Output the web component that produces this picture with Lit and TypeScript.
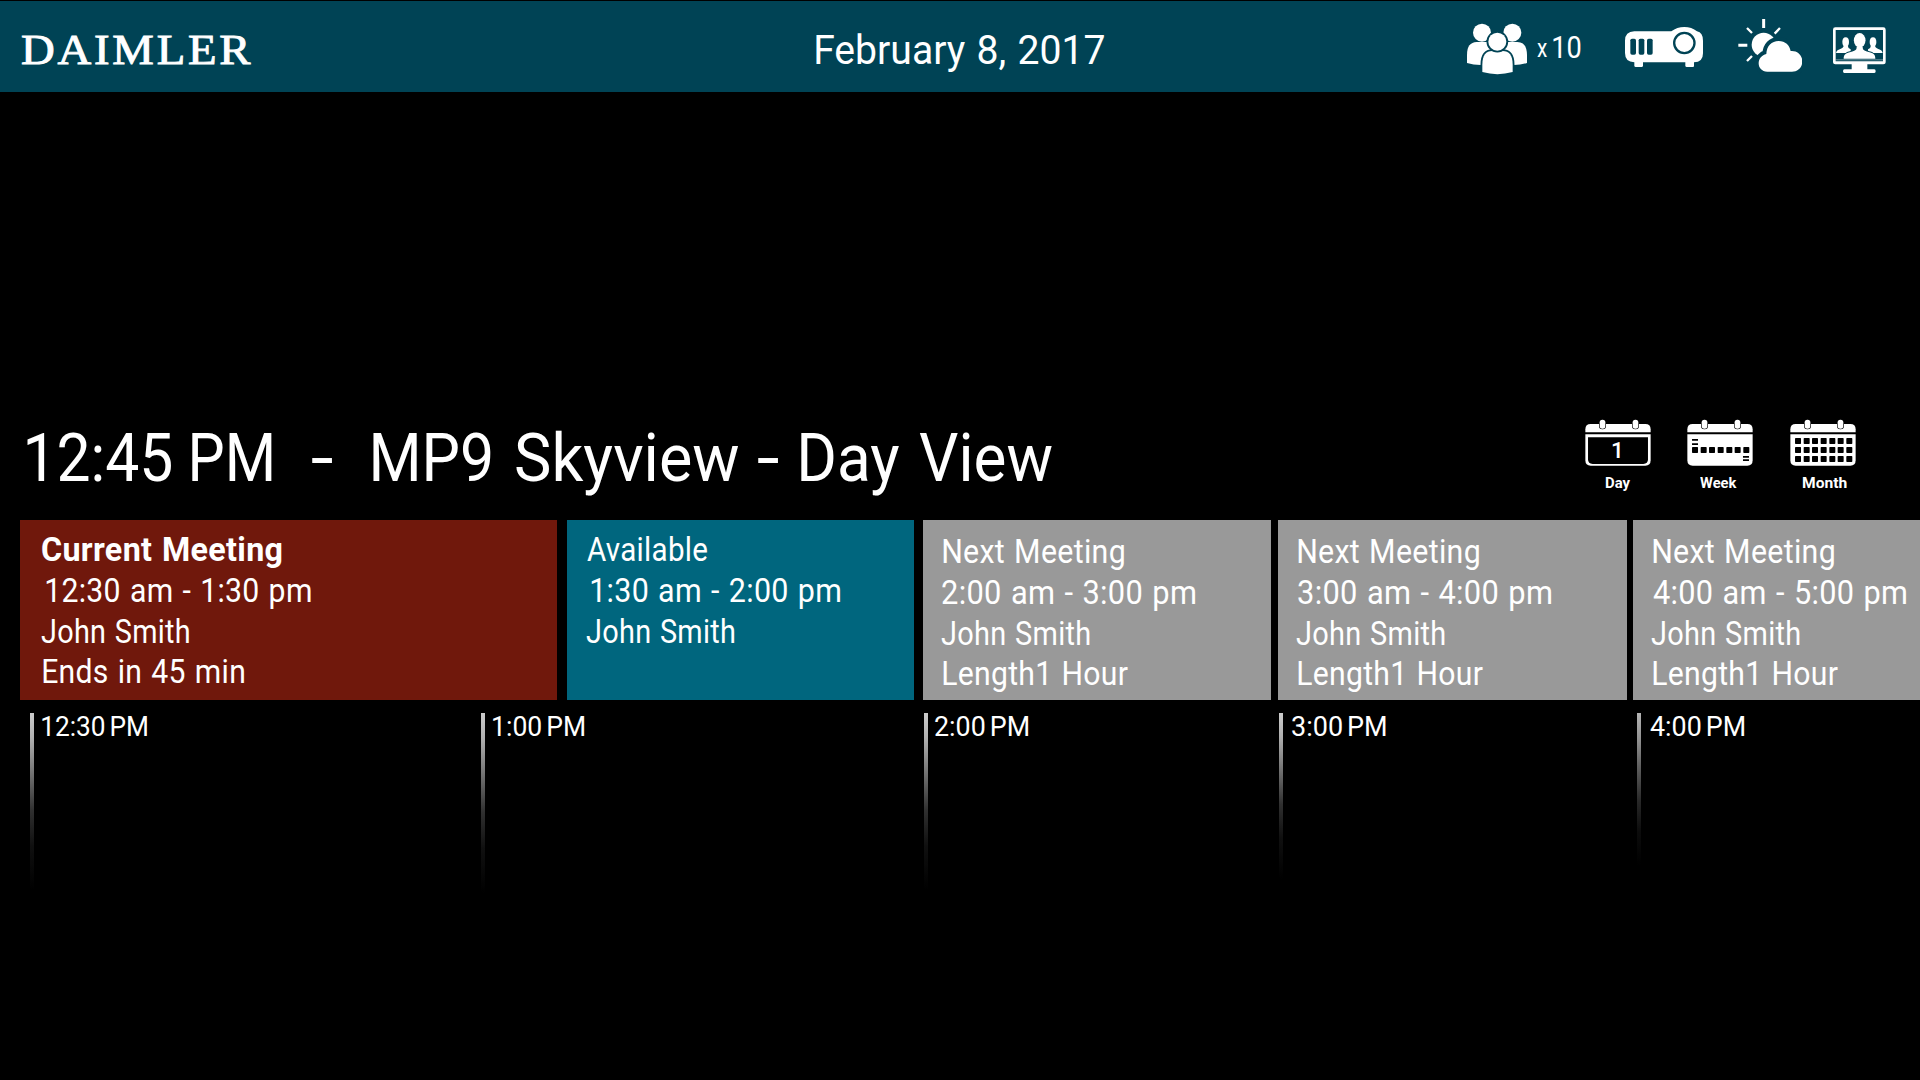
import {css, html, LitElement, svg} from 'lit';
import {customElement, property, query} from 'lit/decorators.js';

interface Word {
  text: string;
  width: number;
  gap: number; // space before the word
}

interface CardLine {
  text: string;
  indent: number;
  width: number;
  bold?: boolean;
}

interface Card {
  kind: 'current' | 'available' | 'next';
  width: number;
  gap: number;
  lines: CardLine[];
}

interface Slot {
  label: string;
  width: number;
  inset: number;
  labelWidth: number;
  tickHeight: number;
  faint?: boolean;
}

// One run of text, condensed or widened so its ink fills the given width
@customElement('fit-text')
export class FitText extends LitElement {
  @property({ type: String }) text = '';
  @property({ type: Number }) width = 100;

  @query('.run') private run!: HTMLElement;

  static styles = css`
    :host {
      display: block;
      flex: none;
      white-space: pre;
    }

    .run {
      display: inline-block;
      transform-origin: 0 50%;
    }
  `;

  render() {
    return html`<span class="run">${this.text}</span>`;
  }

  updated() {
    const ctx = document.createElement('canvas').getContext('2d') as any;
    const style = getComputedStyle(this.run);
    ctx.font = `${style.fontWeight} ${style.fontSize} ${style.fontFamily}`;
    ctx.letterSpacing = style.letterSpacing === 'normal' ? '0px' : style.letterSpacing;
    ctx.wordSpacing = style.wordSpacing;
    const m = ctx.measureText(this.text);
    const scale = this.width / (m.actualBoundingBoxLeft + m.actualBoundingBoxRight);
    this.style.width = `${this.width}px`;
    this.run.style.transform =
      `translateX(${m.actualBoundingBoxLeft * scale}px) scaleX(${scale})`;
  }
}

const TITLE: Word[] = [
  { text: '12:45', width: 144.5, gap: 27 },
  { text: 'PM', width: 80, gap: 20 },
  { text: '-', width: 20, gap: 40 },
  { text: 'MP9', width: 117.5, gap: 41.5 },
  { text: 'Skyview', width: 223, gap: 25.5 },
  { text: '-', width: 20, gap: 18.5 },
  { text: 'Day', width: 98.5, gap: 23.5 },
  { text: 'View', width: 133.5, gap: 19.5 },
];

const nextMeeting = (time: string, width: number, gap: number): Card => ({
  kind: 'next',
  width,
  gap,
  lines: [
    { text: 'Next Meeting', indent: 20, width: 181.5 },
    { text: time, indent: 19.3, width: 253.5 },
    { text: 'John Smith', indent: 18.2, width: 148.5 },
    { text: 'Length1 Hour', indent: 20, width: 185 },
  ],
});

const CARDS: Card[] = [
  {
    kind: 'current',
    width: 537.5,
    gap: 19.5,
    lines: [
      { text: 'Current Meeting', indent: 22.2, width: 239.5, bold: true },
      { text: '12:30 am - 1:30 pm', indent: 26.5, width: 265 },
      { text: 'John Smith', indent: 21.8, width: 148 },
      { text: 'Ends in 45 min', indent: 23.7, width: 201 },
    ],
  },
  {
    kind: 'available',
    width: 347.5,
    gap: 9.7,
    lines: [
      { text: 'Available', indent: 20, width: 120.7 },
      { text: '1:30 am - 2:00 pm', indent: 24.2, width: 249.5 },
      { text: 'John Smith', indent: 19.5, width: 148.2 },
    ],
  },
  nextMeeting('2:00 am - 3:00 pm', 348.3, 9),
  nextMeeting('3:00 am - 4:00 pm', 348.4, 6.8),
  nextMeeting('4:00 am - 5:00 pm', 348.4, 6.6),
];

const SLOTS: Slot[] = [
  { label: '12:30 PM', width: 451, inset: 8.3, labelWidth: 105.5, tickHeight: 177 },
  { label: '1:00 PM', width: 443, inset: 8.3, labelWidth: 91.7, tickHeight: 180 },
  { label: '2:00 PM', width: 355, inset: 6.6, labelWidth: 93.7, tickHeight: 177 },
  { label: '3:00 PM', width: 358, inset: 8.6, labelWidth: 94.3, tickHeight: 166 },
  { label: '4:00 PM', width: 283, inset: 8.8, labelWidth: 94.7, tickHeight: 152, faint: true },
];

// Header icons share the full bar height, three units to a pixel
const peopleIcon = html`
  <svg class="bar-icon people" viewBox="51 3 180 273">
    <circle cx="96" cy="98" r="27" />
    <circle cx="187" cy="98" r="27" />
    <path d="M51 189V166C51 138 61 127 80 126H112C126 127 134 134 137 146V195H92Q70 195 51 189Z" />
    <path d="M231 189V166C231 138 221 127 202 126H172C158 127 150 134 147 146V195H192Q212 195 231 189Z" />
    <path class="front" d="M97 216V194C97 166 108 153 127 153H158C177 153 188 166 188 194V216Q142 229 97 216Z" />
    <circle class="front" cx="142" cy="125" r="27" />
  </svg>
`;

const projectorIcon = html`
  <svg class="bar-icon projector" viewBox="525 3 234 273">
    <path d="M553 94H664Q681 81 703 81T741 94Q759 98 759 122V160Q759 187 732 187V198Q732 201 729 201H710Q707 201 706 198V187H579V198Q578 201 575 201H557Q554 201 553 198V187Q525 186 525 159V122Q525 95 553 94Z" />
    <circle class="lens" cx="703" cy="129" r="30.5" />
    <rect class="hole" x="541" y="116" width="17" height="48" rx="5" />
    <rect class="hole" x="566" y="116" width="17" height="48" rx="5" />
    <rect class="hole" x="591" y="116" width="17" height="48" rx="5" />
  </svg>
`;

const weatherIcon = html`
  <svg class="bar-icon weather" viewBox="113 3 193 273">
    <circle cx="190" cy="134" r="36" />
    <path class="ray wide" d="M190 57V84M114 136H141" />
    <path class="ray" d="M140 84L155 99M239 84L223 101M155 168L140 183" />
    <path class="cloud" d="M201 215C184 215 175 203 175 190C175 176 185 165 198 162C199 138 214 123 235 123C255 123 268 136 271 153C292 151 306 166 306 184C306 202 293 215 275 215Z" />
  </svg>
`;

const conferenceIcon = html`
  <svg class="bar-icon conference" viewBox="399 3 158 273">
    <path fill-rule="evenodd" d="M406 82H550Q557 82 557 89V187Q557 193 550 193H406Q399 193 399 187V89Q399 82 406 82ZM407 90V184H549V90Z" />
    <ellipse cx="437" cy="126" rx="10" ry="14" />
    <ellipse cx="519" cy="126" rx="10" ry="14" />
    <path d="M408 159Q409 150 421 147Q431 144 431 136H443Q443 144 452 148V159ZM548 159Q547 150 535 147Q525 144 525 136H513Q513 144 504 148V159Z" />
    <path class="speaker" d="M431 176C431 164 437 159 452 156C467 152 470 149 470 140H488C488 149 491 152 506 156C521 159 526 164 526 176Z" />
    <ellipse cx="479" cy="121" rx="17.5" ry="22" />
    <rect x="407" y="178" width="142" height="3" opacity="0.45" />
    <path d="M455 191H502V208H523Q527 209 527 213.500T523 219H433Q429 218 429 213.500T433 208H455Z" />
  </svg>
`;

const calendarFrame = svg`
  <path d="M46 82V73Q46 57 62 57H226Q242 57 242 73V82Z" />
  <path d="M46 88H242V166Q242 182 226 182H62Q46 182 46 166Z" />
  <rect class="ring" x="89" y="44" width="17" height="27" rx="8" />
  <rect class="ring" x="188" y="44" width="17" height="27" rx="8" />
`;

const COLUMNS = [60, 86, 111, 137, 163, 188, 214];

const dayRow = (y: number) =>
  COLUMNS.map((x) => svg`<rect class="ink" x=${x} y=${y} width="18" height="18" rx="2" />`);

const dayIcon = html`
  <svg class="calendar" viewBox="45 42 198 142">
    ${calendarFrame}
    <path class="ink" d="M54 97H234V163Q234 177 220 177H68Q54 177 54 163Z" />
    <text class="date" x="142" y="159">1</text>
  </svg>
`;

const weekIcon = html`
  <svg class="calendar week" viewBox="45 42 198 142">
    ${calendarFrame}
    <path class="ink" d="M60 102H78V107H60ZM60 115H78V120H60ZM213 153H231V158H213ZM213 163H231V168H213Z" />
    ${dayRow(126)}
  </svg>
`;

const monthIcon = html`
  <svg class="calendar" viewBox="45 42 198 142">
    ${calendarFrame}
    ${[99, 126, 153].map(dayRow)}
  </svg>
`;

@customElement('meeting-card')
export class MeetingCard extends LitElement {
  @property({ attribute: false }) card!: Card;

  static styles = css`
    :host {
      display: block;
      flex: none;
    }

    .card {
      box-sizing: border-box;
      height: 180px;
      padding-top: 10.3px;
      font-size: 32.5px;
      line-height: 40.7px;
      word-spacing: 0.04em;
      letter-spacing: 0.01em;
    }

    .current {
      background: #70180c;
    }

    .available {
      background: #00667e;
    }

    .next {
      padding-top: 12.3px;
      background: #999;
    }

    .bold {
      font-weight: 700;
    }
  `;

  render() {
    return html`
      <div class="card ${this.card.kind}" style="width: ${this.card.width}px">
        ${this.card.lines.map(
          (line) => html`
            <div class=${line.bold ? 'bold' : ''} style="padding-left: ${line.indent}px">
              <fit-text .text=${line.text} .width=${line.width}></fit-text>
            </div>
          `
        )}
      </div>
    `;
  }
}

@customElement('app-root')
export class AppRoot extends LitElement {
  static styles = css`
    :host {
      display: flex;
      flex-direction: column;
      box-sizing: border-box;
      width: 1920px;
      height: 1080px;
      padding-top: 1px;
      overflow: hidden;
      background: #000;
      color: #fff;
      font-family: Roboto, 'Liberation Sans', sans-serif;
    }

    .bar {
      display: grid;
      grid-template-columns: 816px 1fr auto;
      height: 91px;
      background: #004355;
      line-height: 91px;
    }

    .logo {
      padding: 4px 0 0 21.5px;
      font-family: 'Liberation Serif', serif;
      font-size: 42px;
      letter-spacing: 0.06em;
      -webkit-text-stroke: 0.9px #fff;
    }

    .today {
      padding-top: 4px;
      font-size: 41px;
      word-spacing: 0.04em;
    }

    .status {
      display: flex;
      padding-right: 34.3px;
    }

    .bar-icon {
      display: block;
      height: 91px;
      fill: #fff;
    }

    .people {
      width: 60px;
    }

    .times {
      padding-left: 10px;
      font-size: 25px;
      padding-top: 2px;
    }

    .count {
      padding: 0.5px 44.3px 0 5.7px;
      font-size: 32px;
    }

    .projector {
      width: 78px;
    }

    .weather {
      width: 64.3px;
      margin: 0 31px 0 34.7px;
    }

    .conference {
      width: 52.7px;
    }

    .front,
    .cloud,
    .speaker {
      stroke: #004355;
      stroke-width: 11;
      paint-order: stroke;
    }

    .cloud {
      stroke-width: 24;
    }

    .speaker {
      stroke-width: 6;
    }

    .lens {
      stroke: #004355;
      stroke-width: 7;
    }

    .hole {
      fill: #004355;
    }

    .ray {
      stroke: #fff;
      stroke-width: 7;
    }

    .wide {
      stroke-width: 9;
    }

    .heading {
      display: flex;
      justify-content: space-between;
      margin-top: 325.4px;
      height: 102.6px;
    }

    .title {
      display: flex;
      padding-top: 1.6px;
      font-size: 66px;
      line-height: 80px;
    }

    .views {
      display: flex;
      gap: 36.4px;
      padding: 1.6px 64px 0 0;
    }

    .view {
      display: flex;
      flex-direction: column;
      align-items: center;
      width: 66px;
      font-size: 15px;
      font-weight: 700;
      line-height: 20px;
    }

    .calendar {
      display: block;
      width: 66px;
      height: 47.3px;
      margin-bottom: 6.5px;
      fill: #fff;
    }

    .week {
      margin-right: 1px;
    }

    .ring {
      stroke: #000;
      stroke-width: 4;
      paint-order: stroke;
    }

    .ink {
      fill: #000;
    }

    .date {
      font-size: 68px;
      font-weight: 500;
      text-anchor: middle;
    }

    .day-label {
      margin-right: 1px;
    }

    .week-label {
      margin-right: 3px;
    }

    .month-label {
      margin-left: 3px;
    }

    .cards {
      display: flex;
      width: 2100px;
    }

    .timeline {
      display: flex;
      padding: 13px 0 0 30px;
    }

    .slot {
      display: flex;
      flex: none;
      font-size: 28px;
      line-height: 27px;
      word-spacing: -0.1em;
    }

    .tick {
      flex: none;
      width: 4px;
      background: linear-gradient(#ccc, #b0b0b0 14%, #808080 30%, #303030 55%, #101010 75%, #000);
    }

    .tick.faint {
      background: linear-gradient(#b4b4b4, #909090 18%, #606060 35%, #282828 58%, #0c0c0c 78%, #000);
    }
  `;

  render() {
    return html`
      <header class="bar">
        <div class="logo"><fit-text .text=${'DAIMLER'} .width=${228.5}></fit-text></div>
        <div class="today"><fit-text .text=${'February 8, 2017'} .width=${288.5}></fit-text></div>
        <div class="status">
          ${peopleIcon}
          <div class="times"><fit-text .text=${'x'} .width=${10}></fit-text></div>
          <div class="count"><fit-text .text=${'10'} .width=${28}></fit-text></div>
          ${projectorIcon} ${weatherIcon} ${conferenceIcon}
        </div>
      </header>
      <section class="heading">
        <div class="title">
          ${TITLE.map(
            (word) => html`
              <div style="padding-left: ${word.gap}px">
                <fit-text .text=${word.text} .width=${word.width}></fit-text>
              </div>
            `
          )}
        </div>
        <nav class="views">
          <div class="view">
            ${dayIcon}
            <fit-text class="day-label" .text=${'Day'} .width=${25.4}></fit-text>
          </div>
          <div class="view">
            ${weekIcon}
            <fit-text class="week-label" .text=${'Week'} .width=${37.3}></fit-text>
          </div>
          <div class="view">
            ${monthIcon}
            <fit-text class="month-label" .text=${'Month'} .width=${44.7}></fit-text>
          </div>
        </nav>
      </section>
      <section class="cards">
        ${CARDS.map(
          (card) => html`
            <meeting-card style="margin-left: ${card.gap}px" .card=${card}></meeting-card>
          `
        )}
      </section>
      <section class="timeline">
        ${SLOTS.map(
          (slot) => html`
            <div class="slot" style="width: ${slot.width}px; gap: ${slot.inset}px">
              <div
                class="tick ${slot.faint ? 'faint' : ''}"
                style="height: ${slot.tickHeight}px"
              ></div>
              <fit-text .text=${slot.label} .width=${slot.labelWidth}></fit-text>
            </div>
          `
        )}
      </section>
    `;
  }
}

declare global {
  interface HTMLElementTagNameMap {
    'app-root': AppRoot;
    'fit-text': FitText;
    'meeting-card': MeetingCard;
  }
}
